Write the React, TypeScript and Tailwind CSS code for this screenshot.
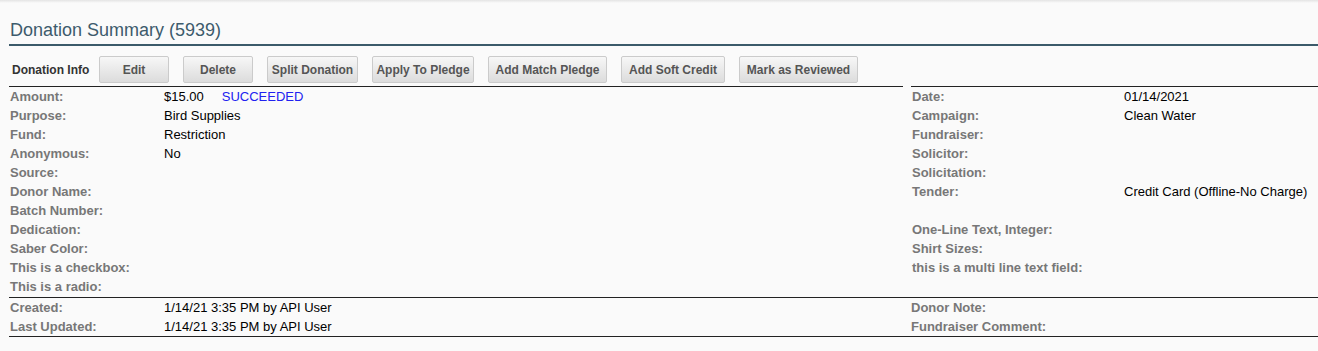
import React from "react";

type Row = { label: string; value?: React.ReactNode };

const leftRows: Row[] = [
  {
    label: "Amount:",
    value: (
      <span>
        $15.00<span className="ml-[18px] text-[#2121f0]">SUCCEEDED</span>
      </span>
    ),
  },
  { label: "Purpose:", value: "Bird Supplies" },
  { label: "Fund:", value: "Restriction" },
  { label: "Anonymous:", value: "No" },
  { label: "Source:" },
  { label: "Donor Name:" },
  { label: "Batch Number:" },
  { label: "Dedication:" },
  { label: "Saber Color:" },
  { label: "This is a checkbox:" },
  { label: "This is a radio:" },
];

const rightRows: Row[] = [
  { label: "Date:", value: "01/14/2021" },
  { label: "Campaign:", value: "Clean Water" },
  { label: "Fundraiser:" },
  { label: "Solicitor:" },
  { label: "Solicitation:" },
  { label: "Tender:", value: "Credit Card (Offline-No Charge)" },
  { label: "" },
  { label: "One-Line Text, Integer:" },
  { label: "Shirt Sizes:" },
  { label: "this is a multi line text field:" },
];

const buttons: { text: string; w: string }[] = [
  { text: "Edit", w: "w-[70px]" },
  { text: "Delete", w: "w-[70px]" },
  { text: "Split Donation", w: "w-[91px]" },
  { text: "Apply To Pledge", w: "w-[102px]" },
  { text: "Add Match Pledge", w: "w-[119px]" },
  { text: "Add Soft Credit", w: "w-[104px]" },
  { text: "Mark as Reviewed", w: "w-[119px]" },
];

function DataRow({ row, labelW }: { row: Row; labelW: string }) {
  return (
    <div className="flex h-[19px] items-center text-[13px] leading-[19px]">
      <div className={`${labelW} shrink-0 font-bold text-[#777777] whitespace-nowrap`}>{row.label}</div>
      <div className="text-black whitespace-nowrap">{row.value}</div>
    </div>
  );
}

export default function App() {
  return (
    <div
      className="w-[1318px] h-[351px] bg-[#fafafa] overflow-hidden text-[12px]"
      style={{ fontFamily: '"Liberation Sans", Arial, sans-serif' }}
    >
      <div className="h-[3px] bg-gradient-to-b from-[#e4e4e4] to-[#fafafa]" />
      <div className="ml-[9px] pt-[16px]">
        <div className="border-b-2 border-[#3b5a6a] pb-[3px] pl-[1px] text-[18px] leading-[22px] text-[#3d5b6c]">
          Donation Summary (5939)
        </div>

        <div className="mt-[10px] flex h-[27px] items-center">
          <div className="w-[90px] pl-[3px] font-bold text-[#333333] whitespace-nowrap">Donation Info</div>
          <div className="flex gap-[14px]">
            {buttons.map((b) => (
              <button
                key={b.text}
                className={`${b.w} h-[27px] rounded-[2px] border border-[#cbcbcb] bg-gradient-to-b from-[#f7f7f7] to-[#dcdcdc] text-center font-bold text-[12px] text-[#555555] whitespace-nowrap`}
              >
                {b.text}
              </button>
            ))}
          </div>
        </div>

        <div className="mt-[3px] flex gap-[8px]">
          <div className="w-[894px] border-t border-[#222222] pl-[1px]">
            {leftRows.map((r) => (
              <DataRow key={r.label} row={r} labelW="w-[154px]" />
            ))}
          </div>
          <div className="flex-1 border-t border-[#222222] pl-[1px]">
            {rightRows.map((r, i) => (
              <DataRow key={r.label + i} row={r} labelW="w-[212px]" />
            ))}
          </div>
        </div>

        <div className="mt-[1px] flex border-y border-[#222222] pl-[1px]">
          <div className="w-[901px]">
            <DataRow row={{ label: "Created:", value: "1/14/21 3:35 PM by API User" }} labelW="w-[154px]" />
            <DataRow row={{ label: "Last Updated:", value: "1/14/21 3:35 PM by API User" }} labelW="w-[154px]" />
          </div>
          <div className="flex-1">
            <DataRow row={{ label: "Donor Note:" }} labelW="w-[212px]" />
            <DataRow row={{ label: "Fundraiser Comment:" }} labelW="w-[212px]" />
          </div>
        </div>
      </div>
    </div>
  );
}
